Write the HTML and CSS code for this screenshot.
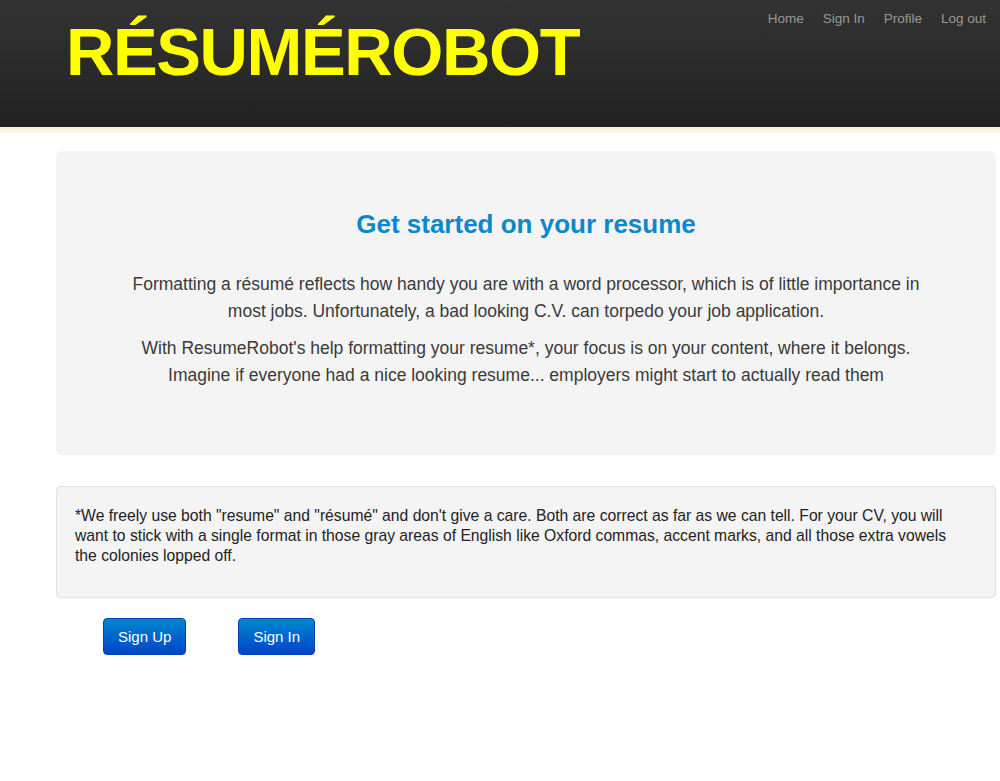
FILE: index.html
```html
<!DOCTYPE html>
<html>
<head>
<meta charset="utf-8">
<link rel="stylesheet" href="styles.css">
</head>
<body>
<header class="topbar">
  <h1 class="brand">RÉSUMÉROBOT</h1>
  <nav class="nav">
    <a href="#">Home</a>
    <a href="#">Sign In</a>
    <a href="#">Profile</a>
    <a href="#">Log out</a>
  </nav>
</header>
<div class="stripe"></div>
<main class="container">
  <section class="hero">
    <h2 class="hero-title">Get started on your resume</h2>
    <p class="lead">Formatting a résumé reflects how handy you are with a word processor, which is of little importance in most jobs. Unfortunately, a bad looking C.V. can torpedo your job application.</p>
    <p class="lead">With ResumeRobot's help formatting your resume*, your focus is on your content, where it belongs. Imagine if everyone had a nice looking resume... employers might start to actually read them</p>
  </section>
  <section class="well">
    <p>*We freely use both "resume" and "résumé" and don't give a care. Both are correct as far as we can tell. For your CV, you will want to stick with a single format in those gray areas of English like Oxford commas, accent marks, and all those extra vowels the colonies lopped off.</p>
  </section>
  <div class="actions">
    <a class="btn" href="#">Sign Up</a>
    <a class="btn" href="#">Sign In</a>
  </div>
</main>
</body>
</html>
```
FILE: styles.css
```css
* { box-sizing: border-box; }
body {
  margin: 0;
  font-family: "Liberation Sans", Arial, sans-serif;
  color: #333;
  background: #fff;
}
.topbar {
  height: 127px;
  background: linear-gradient(#333333, #222222);
  display: flex;
  justify-content: space-between;
  align-items: flex-start;
}
.brand {
  margin: 13px 0 0 66px;
  font-size: 67px;
  line-height: 77px;
  font-weight: bold;
  color: #ffff00;
  letter-spacing: -1.4px;
}
.nav {
  display: flex;
  gap: 19px;
  padding: 10px 14px 0 0;
}
.nav a {
  color: #999;
  text-decoration: none;
  font-size: 13.5px;
  line-height: 18px;
}
.stripe {
  height: 6px;
  background: linear-gradient(#f6eedd, #fdf9ee);
}
.container {
  margin-left: 56px;
  width: 940px;
  padding-top: 18px;
}
.hero {
  background: #f4f4f4;
  border-radius: 6px;
  padding: 55px 60px 53px;
  text-align: center;
  height: 304px;
}
.hero-title {
  margin: 0 0 29px;
  color: #0a88cc;
  font-size: 26px;
  line-height: 36px;
  font-weight: bold;
}
.lead {
  margin: 0 0 10px;
  font-size: 17.5px;
  line-height: 27px;
  font-weight: 300;
  color: #3a3a3a;
}
.well {
  margin-top: 31px;
  background: #f4f4f4;
  border: 1px solid #e3e3e3;
  border-radius: 4px;
  padding: 19px 26px 30px 18px;
  height: 112px;
}
.well p {
  margin: 0;
  font-size: 15.7px;
  line-height: 20px;
  color: #222;
}
.actions {
  display: flex;
  gap: 52px;
  padding: 20px 0 0 47px;
}
.btn {
  display: inline-block;
  padding: 0 14px;
  height: 37px;
  line-height: 35px;
  font-size: 15px;
  color: #fff;
  text-decoration: none;
  background: linear-gradient(#0088cc, #0044cc);
  border: 1px solid #0040b8;
  border-radius: 4px;
}
```
